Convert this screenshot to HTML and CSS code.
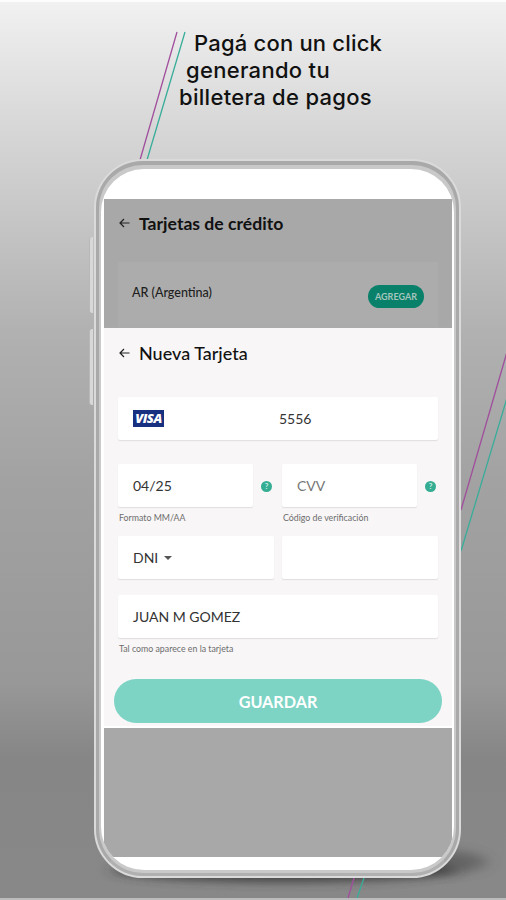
FILE: index.html
```html
<!DOCTYPE html>
<html lang="es">
<head>
    <meta charset="UTF-8">
    <meta name="viewport" content="width=device-width, initial-scale=1.0">
    <title>Billetera de pagos</title>
    <link rel="stylesheet" href="styles.css">
</head>
<body>

<svg class="backdrop" width="506" height="900" viewBox="0 0 506 900">
    <defs>
        <filter id="soft" x="-30%" y="-100%" width="160%" height="300%">
            <feGaussianBlur stdDeviation="8 5"/>
        </filter>
    </defs>
    <ellipse cx="285" cy="870" rx="172" ry="12" fill="#333" opacity="0.8" filter="url(#soft)"/>
    <ellipse cx="440" cy="862" rx="46" ry="12" fill="#444" opacity="0.5" filter="url(#soft)"/>
    <g fill="none" stroke-width="1.3">
        <path stroke="#a04f9c" d="M177 32L140 160M507 352L461 510M354 878L348 898"/>
        <path stroke="#38ad99" d="M185 32L147 160M507 398L461 551M364 878L357 898"/>
    </g>
</svg>

<div class="page">
    <h1 class="headline">
        <span class="line line-1">Pagá con un click</span>
        <span class="line line-2">generando tu</span>
        <span class="line line-3">billetera de pagos</span>
    </h1>

    <div class="phone">
        <div class="side-button volume"></div>
        <div class="side-button power"></div>
        <div class="bezel">
            <div class="glass">
                <div class="app">
                    <div class="cards">
                        <div class="title-bar">
                            <svg class="back" viewBox="0 0 11 10"><path d="M10.500 5H1M5 1L1 5L5 9"/></svg>
                            <h2 class="title title-bold">Tarjetas de crédito</h2>
                        </div>
                        <div class="country">
                            <span class="country-name">AR (Argentina)</span>
                            <button class="add">AGREGAR</button>
                        </div>
                    </div>

                    <form class="sheet">
                        <div class="title-bar">
                            <svg class="back" viewBox="0 0 11 10"><path d="M10.500 5H1M5 1L1 5L5 9"/></svg>
                            <h2 class="title">Nueva Tarjeta</h2>
                        </div>

                        <div class="field card-number">
                            <span class="visa">VISA</span>
                            <span class="digits">5556</span>
                        </div>

                        <div class="row">
                            <div class="column">
                                <div class="with-help">
                                    <div class="field">04/25</div>
                                    <span class="help">?</span>
                                </div>
                                <small class="hint">Formato MM/AA</small>
                            </div>
                            <div class="column">
                                <div class="with-help">
                                    <div class="field placeholder">CVV</div>
                                    <span class="help">?</span>
                                </div>
                                <small class="hint">Código de verificación</small>
                            </div>
                        </div>

                        <div class="row row-id">
                            <div class="field">DNI <span class="caret"></span></div>
                            <div class="field"></div>
                        </div>

                        <div class="field name">JUAN M GOMEZ</div>
                        <small class="hint">Tal como aparece en la tarjeta</small>

                        <button class="save">GUARDAR</button>
                    </form>
                </div>
            </div>
        </div>
    </div>
</div>

</body>
</html>
```
FILE: styles.css
```css
* {
    box-sizing: border-box;
}

body {
    margin: 0;
    font-family: Lato, sans-serif;
    color: #333;
}

.page {
    width: 506px;
    height: 900px;
    padding-top: 28px;
    overflow: hidden;
    border-top: 2px solid #fdfdfd;
    border-bottom: 2px solid #bcbcbc;
    background: linear-gradient(#f1f1f1 0, #dadada 110px, #c9c9c9 200px, #b1b1b1 330px, #a2a2a2 480px, #989898 680px, #868686 755px, #888 100%);
}

.backdrop {
    position: absolute;
    top: 0;
    left: 0;
}

.headline {
    margin: 0 0 48px 179px;
    font: 500 22px/27px Inter, sans-serif;
    color: #111;
}

.line {
    display: block;
    white-space: nowrap;
}

.line-1 {
    padding-left: 15px;
    letter-spacing: 0.200px;
}

.line-2 {
    padding-left: 7px;
    letter-spacing: 0.300px;
}

.line-3 {
    letter-spacing: 0.300px;
}

/* phone */

.phone {
    position: relative;
    width: 367px;
    height: 719px;
    margin-left: 94px;
    border: 2px solid #dadada;
    border-radius: 49px;
    background: #c4c4c4;
}

.side-button {
    position: absolute;
    left: -7px;
    width: 4px;
    background: #d8d8d8;
    border-left: 1px solid #b8b8b8;
    border-radius: 3px 0 0 3px;
}

.volume {
    top: 76px;
    height: 76px;
}

.power {
    top: 168px;
    height: 76px;
}

.bezel {
    height: 100%;
    padding: 4px 2px 3px;
    border: 3px solid #a9a9a9;
    border-top-width: 4px;
    border-bottom-color: #b0b0b0;
    border-radius: 47px;
    background: #c9c9c9;
}

.glass {
    height: 100%;
    padding: 30px 2px 13px 3px;
    overflow: hidden;
    border-radius: 43px;
    background: #fff;
}

.app {
    height: 100%;
    background: #a8a8a8;
}

/* app */

.cards {
    height: 129px;
    padding: 0 14px;
}

.title-bar {
    display: flex;
    align-items: center;
    gap: 9px;
    height: 48px;
}

.back {
    width: 11px;
    height: 10px;
    margin-left: 1px;
    fill: none;
    stroke: #222;
    stroke-width: 1.200;
}

.title {
    margin: 0;
    font-size: 18px;
    font-weight: 500;
    color: #111;
}

.title-bold {
    font-size: 17.600px;
    font-weight: 700;
}

.country {
    display: flex;
    align-items: center;
    justify-content: space-between;
    height: 66px;
    margin-top: 15px;
    padding: 2px 14px 0;
    background: #acacac;
}

.country-name {
    margin-bottom: 7px;
    font-size: 12.500px;
    font-weight: 500;
    color: #1d1d1d;
}

.add {
    width: 56px;
    height: 23px;
    padding: 0;
    border: 0;
    border-radius: 12px;
    background: #08806a;
    font: 700 9px Lato, sans-serif;
    color: #a5c5bd;
}

.sheet {
    height: 400px;
    padding: 1px 14px 0;
    border-bottom: 2px solid #fff;
    background: #f8f6f7;
    box-shadow: 0 -1px 2px #aaa;
    clip-path: inset(-3px 0 0);
}

.field {
    display: flex;
    flex: 1;
    align-items: center;
    height: 43px;
    padding: 0 15px;
    border-radius: 2px;
    background: #fff;
    box-shadow: 0 1px 1px #e0dedf;
    font-size: 14px;
}

.card-number {
    margin-top: 20px;
}

.visa {
    width: 31px;
    height: 17px;
    background: #17307f;
    font: italic 800 13px/17px "Open Sans", sans-serif;
    letter-spacing: -0.500px;
    text-align: center;
    color: #fff;
}

.digits {
    margin-left: 115px;
}

.row {
    display: flex;
    gap: 8px;
    margin-top: 24px;
}

.column {
    flex: 1;
}

.with-help {
    display: flex;
    align-items: center;
    gap: 8px;
}

.placeholder {
    color: #777;
}

.help {
    width: 11px;
    height: 11px;
    margin: 1px 2px 0 0;
    border-radius: 50%;
    background: #35ad93;
    font-size: 8px;
    font-weight: 700;
    line-height: 11px;
    text-align: center;
    color: #c9efe5;
}

.hint {
    display: block;
    height: 12px;
    margin: 5px 0 0 1px;
    font-size: 8.800px;
    line-height: 12px;
    color: #6d6d6d;
}

.row-id {
    margin-top: 12px;
}

.caret {
    margin-left: 6px;
    border: 4px solid transparent;
    border-top-color: #555;
    border-bottom: 0;
}

.name {
    margin-top: 16px;
}

.save {
    display: block;
    width: 328px;
    height: 44px;
    margin: 24px -4px 0;
    border: 0;
    border-radius: 22px;
    background: #7dd4c5;
    font: 700 16.200px Lato, sans-serif;
    color: #fff;
}
```
